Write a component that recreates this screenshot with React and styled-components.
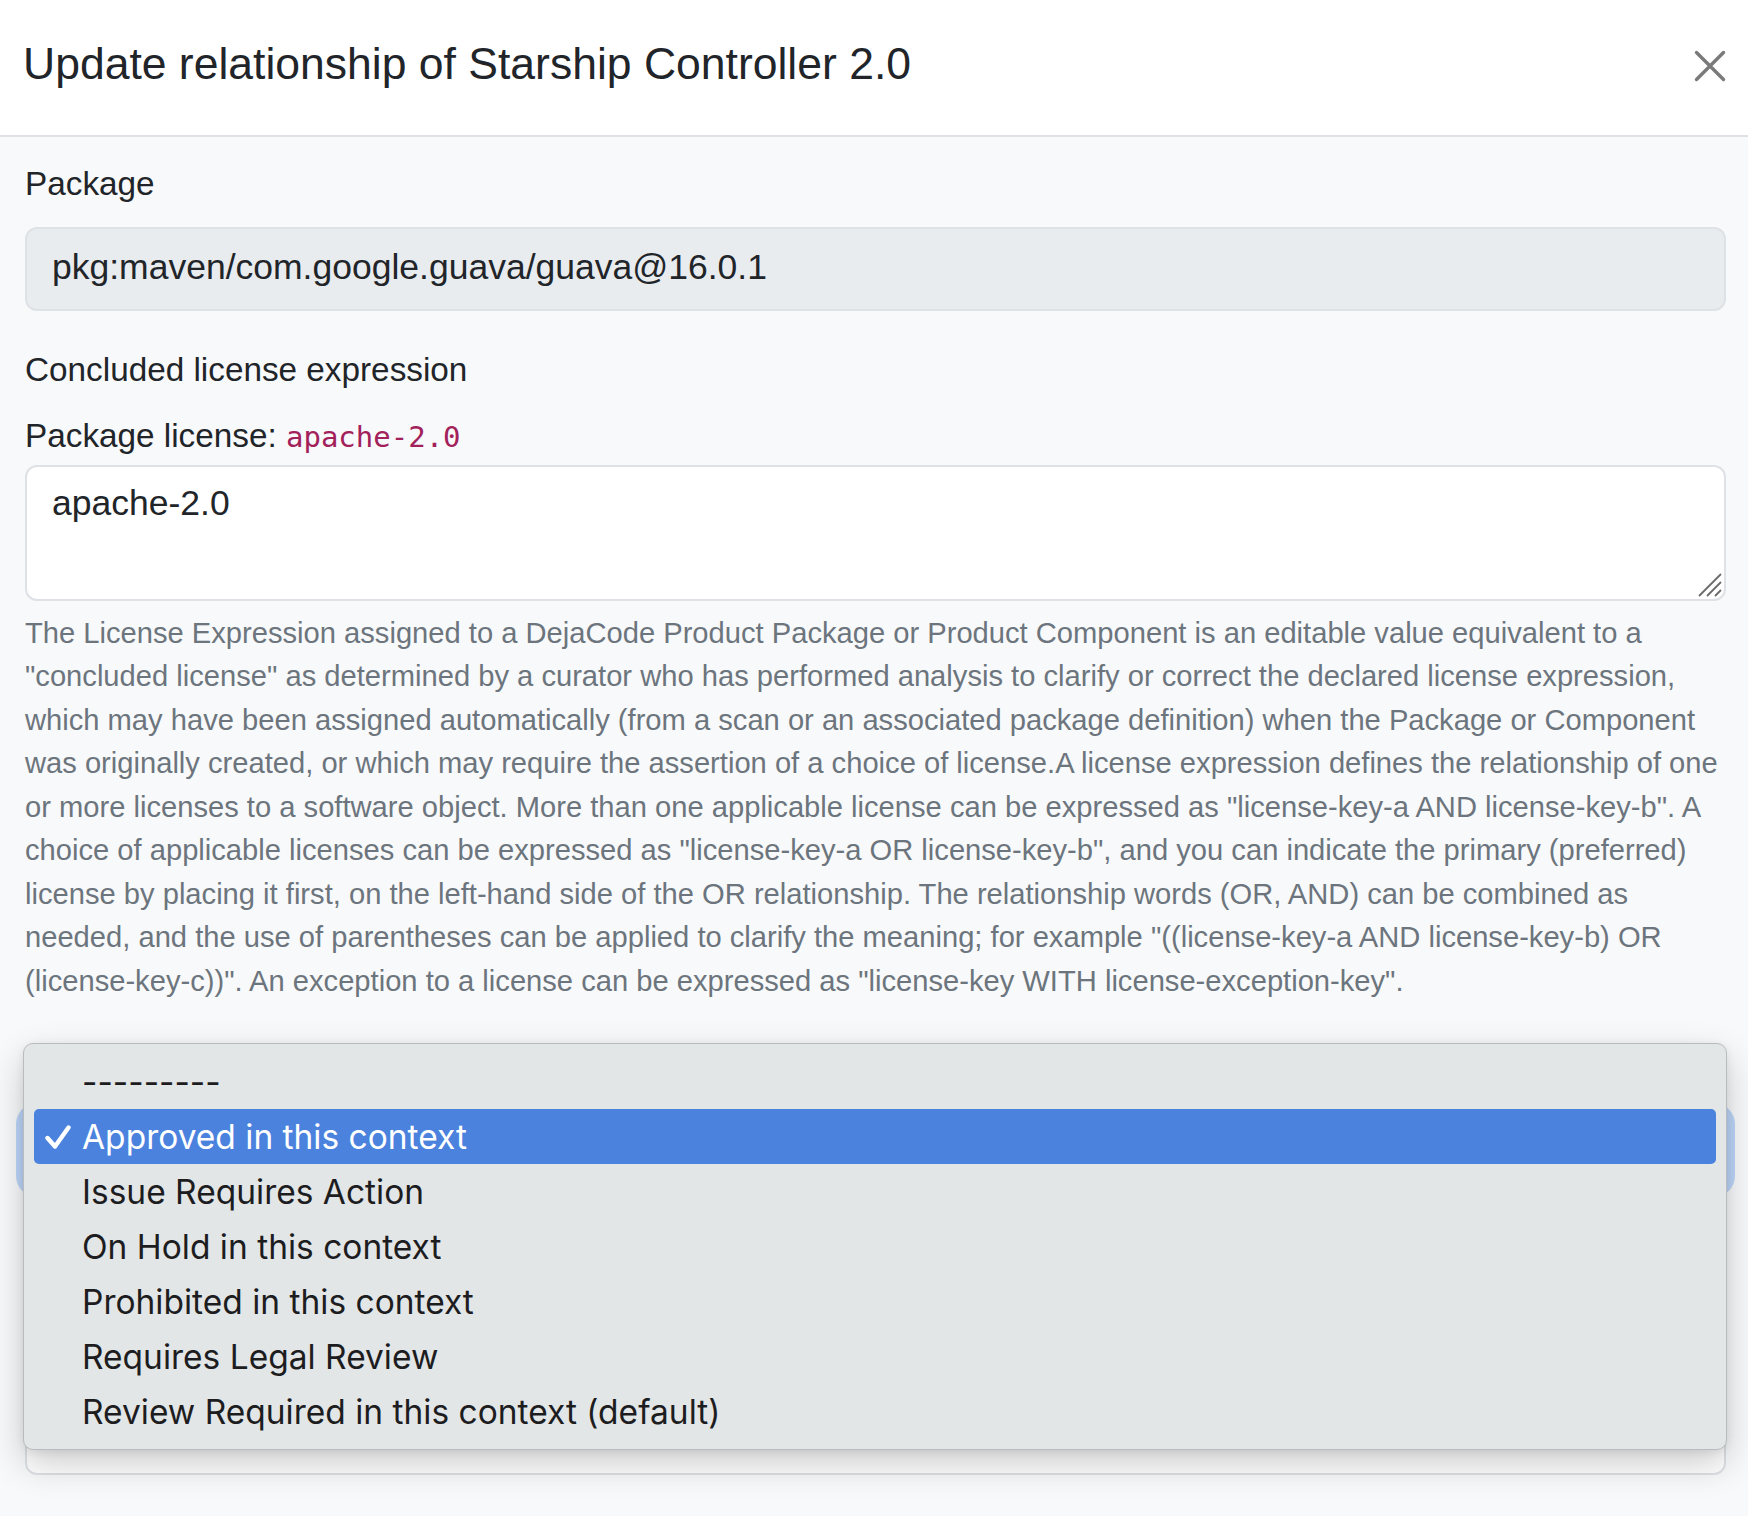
import React from "react";
import styled, { createGlobalStyle } from "styled-components";

const GlobalStyle = createGlobalStyle`
  html, body {
    margin: 0;
    padding: 0;
  }
  body {
    background: #f8f9fa;
    font-family: "Liberation Sans", Arial, Helvetica, sans-serif;
    color: #212529;
  }
  *, *::before, *::after {
    box-sizing: border-box;
  }
`;

const Modal = styled.div`
  width: 1748px;
  min-height: 1516px;
  background: #f8f9fa;
  overflow: hidden;
`;

const Header = styled.header`
  display: flex;
  justify-content: space-between;
  align-items: flex-start;
  height: 137px;
  padding: 37px 22px 0 23px;
  background: #fff;
  border-bottom: 2px solid #dee2e6;
`;

const Title = styled.h5`
  margin: 0;
  font-size: 44.5px;
  font-weight: 400;
  line-height: 1.2;
  color: #212529;
`;

const CloseButton = styled.button`
  width: 32px;
  height: 32px;
  margin-top: 13px;
  padding: 0;
  border: 0;
  background: transparent;
  color: #7a7a7a;
  cursor: pointer;

  svg {
    display: block;
  }
`;

const Body = styled.div`
  padding: 22px 22px 0 25px;
`;

const Group = styled.div`
  margin-top: ${(p) => p.$gap || 0}px;
`;

const Label = styled.label`
  display: block;
  min-height: 49.5px;
  font-size: 33.3px;
  line-height: 49.5px;
  margin-bottom: ${(p) => p.$mb ?? 16}px;
`;

const Code = styled.code`
  font-family: "DejaVu Sans Mono", Menlo, monospace;
  font-size: 29px;
  color: #a3215a;
`;

const ReadonlyInput = styled.input`
  display: block;
  width: 100%;
  height: 84px;
  padding: 12px 25px 15.5px;
  font-family: inherit;
  font-size: 35.5px;
  line-height: 52.5px;
  color: #212529;
  background: #e9ecef;
  border: 2px solid #dee2e6;
  border-radius: 12px;
  outline: none;
`;

const AreaWrap = styled.div`
  position: relative;
`;

const TextArea = styled.textarea`
  display: block;
  width: 100%;
  height: ${(p) => p.$h}px;
  padding: 9.7px 25px 7.7px;
  font-family: inherit;
  font-size: 35.5px;
  line-height: 52.5px;
  color: #212529;
  background: #fff;
  border: 2px solid #dee2e6;
  border-radius: 12px;
  resize: none;
  outline: none;
`;

const Grip = styled.svg`
  position: absolute;
  right: 4px;
  bottom: 4px;
  pointer-events: none;
`;

const Help = styled.div`
  margin-top: 10.5px;
  font-size: 29.15px;
  line-height: 43.5px;
  color: #6c757d;
`;

const SelectWrap = styled.div`
  position: relative;
`;

const Select = styled.div`
  height: 76px;
  background: #fff;
  border: 2px solid #86b7fe;
  border-radius: 12px;
  box-shadow: 0 0 0 9px rgba(13, 110, 253, 0.25);
`;

const Popup = styled.ul`
  position: absolute;
  top: -69px;
  left: -2px;
  right: -1px;
  z-index: 10;
  margin: 0;
  padding: 10px;
  list-style: none;
  background: #e3e6e7;
  border: 1px solid #b9bcbe;
  border-radius: 10px;
  box-shadow: 0 14px 36px rgba(0, 0, 0, 0.2), 0 2px 8px rgba(0, 0, 0, 0.08);
  font-family: Inter, "Noto Sans", sans-serif;
  font-size: 33.5px;
`;

const Option = styled.li`
  position: relative;
  height: 55px;
  padding-left: 48px;
  line-height: 56px;
  border-radius: 5px;
  white-space: nowrap;
  color: ${(p) => (p.$selected ? "#fff" : "#1d1d1f")};
  background: ${(p) => (p.$selected ? "#4a82de" : "transparent")};

  svg {
    position: absolute;
    left: 11px;
    top: 16px;
  }
`;

const options = [
  "---------",
  "Approved in this context",
  "Issue Requires Action",
  "On Hold in this context",
  "Prohibited in this context",
  "Requires Legal Review",
  "Review Required in this context (default)",
];

const helpText =
  'The License Expression assigned to a DejaCode Product Package or Product Component is an editable value equivalent to a "concluded license" as determined by a curator who has performed analysis to clarify or correct the declared license expression, which may have been assigned automatically (from a scan or an associated package definition) when the Package or Component was originally created, or which may require the assertion of a choice of license.A license expression defines the relationship of one or more licenses to a software object. More than one applicable license can be expressed as "license-key-a AND license-key-b". A choice of applicable licenses can be expressed as "license-key-a OR license-key-b", and you can indicate the primary (preferred) license by placing it first, on the left-hand side of the OR relationship. The relationship words (OR, AND) can be combined as needed, and the use of parentheses can be applied to clarify the meaning; for example "((license-key-a AND license-key-b) OR (license-key-c))". An exception to a license can be expressed as "license-key WITH license-exception-key".';

function App() {
  const selected = 1;
  return (
    <Modal>
      <GlobalStyle />
      <Header>
        <Title>Update relationship of Starship Controller 2.0</Title>
        <CloseButton aria-label="Close">
          <svg width="32" height="32" viewBox="0 0 32 32">
            <path
              d="M2.5 2.5 L29.5 29.5 M29.5 2.5 L2.5 29.5"
              stroke="currentColor"
              strokeWidth="3.4"
              strokeLinecap="round"
            />
          </svg>
        </CloseButton>
      </Header>
      <Body>
        <Group>
          <Label $mb={18.5}>Package</Label>
          <ReadonlyInput readOnly value="pkg:maven/com.google.guava/guava@16.0.1" />
        </Group>

        <Group $gap={34}>
          <Label $mb={16.2}>Concluded license expression</Label>
          <Label as="div" $mb={3}>
            Package license: <Code>apache-2.0</Code>
          </Label>
          <AreaWrap>
            <TextArea $h={136} defaultValue="apache-2.0" />
            <Grip width="24" height="24" viewBox="0 0 24 24">
              <path
                d="M1 23 L23 1 M9 23 L23 9 M17 23 L23 17"
                stroke="#6b6b6b"
                strokeWidth="1.8"
              />
            </Grip>
          </AreaWrap>
          <Help>{helpText}</Help>
        </Group>

        <Group $gap={31}>
          <Label $mb={28.5} aria-label="Review status" />
          <SelectWrap>
            <Select aria-label={options[selected]} />
            <Popup>
              {options.map((opt, i) => (
                <Option key={opt} $selected={i === selected}>
                  {i === selected && (
                    <svg width="26" height="24" viewBox="0 0 26 24">
                      <path
                        d="M2.5 13 L10 21.5 L23.5 2.5"
                        fill="none"
                        stroke="#fff"
                        strokeWidth="4.4"
                        strokeLinecap="round"
                        strokeLinejoin="round"
                      />
                    </svg>
                  )}
                  {opt}
                </Option>
              ))}
            </Popup>
          </SelectWrap>
        </Group>

        <Group $gap={33}>
          <Label $mb={16.5} aria-label="Notes" />
          <TextArea $h={188} defaultValue="" />
        </Group>
      </Body>
    </Modal>
  );
}

export default App;
